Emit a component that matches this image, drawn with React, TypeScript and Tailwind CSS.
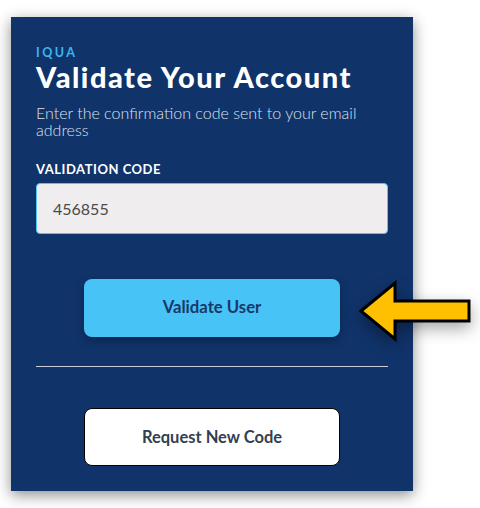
import React from "react";

const ArrowIcon: React.FC = () => (
  <svg width="116" height="62" viewBox="0 0 116 62" className="drop-shadow-[0_6px_8px_rgba(0,0,0,0.35)]">
    <polygon
      points="3,31 37,3 37,21 111,21 111,41 37,41 37,59"
      fill="#fec000"
      stroke="#000"
      strokeWidth="3"
      strokeLinejoin="miter"
    />
  </svg>
);

export default function App() {
  return (
    <div className="relative h-[508px] w-[480px] overflow-hidden bg-white font-['Lato','Noto_Sans',sans-serif]">
      <div className="ml-[11px] mt-[17px] flex h-[474px] w-[402px] flex-col bg-[#10336a] px-[25px] pt-[29px] shadow-[0_4px_14px_rgba(0,0,0,0.45)]">
        <div className="text-[12.5px] font-bold leading-[14px] tracking-[0.2em] text-[#3cb6ee]">IQUA</div>
        <h1 className="text-[29px] font-black leading-[34px] tracking-[0.052em] text-white">Validate Your Account</h1>
        <p className="mt-[10px] text-[16px] font-light leading-[17px] text-[#dde1ea]">
          Enter the confirmation code sent to your email address
        </p>
        <label className="mt-[23px] text-[13px] font-bold leading-[16px] tracking-[0.04em] text-white">
          VALIDATION CODE
        </label>
        <div className="mt-[6px] flex h-[51px] items-center rounded-[4px] border border-[#52c4f5] bg-[#efeded] px-[16px] text-[16px] text-[#4a4a4a]">
          456855
        </div>
        <div className="mt-[45px] flex justify-center">
          <button className="h-[58px] w-[256px] rounded-[8px] bg-[#47c3f6] text-[16.7px] font-bold text-[#17386b] shadow-[0_4px_10px_rgba(0,0,0,0.25)]">
            Validate User
          </button>
        </div>
        <div className="mt-[29px] h-px bg-[#c9ced8]" />
        <div className="mt-[41px] flex justify-center">
          <button className="h-[58px] w-[256px] rounded-[8px] border border-black bg-white text-[16.5px] font-bold text-[#333f4f]">
            Request New Code
          </button>
        </div>
      </div>
      <div className="absolute left-[358px] top-[280px]">
        <ArrowIcon />
      </div>
    </div>
  );
}
